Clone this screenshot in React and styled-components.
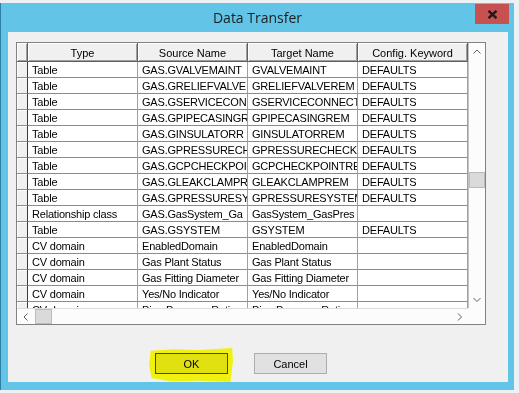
import React from 'react'
import styled, { createGlobalStyle } from 'styled-components'

const GlobalStyle = createGlobalStyle`
  html, body { margin: 0; padding: 0; }
  body {
    width: 519px;
    height: 393px;
    overflow: hidden;
    background: #eef1f3;
    font-family: "Liberation Sans", Arial, sans-serif;
  }
`

const Desktop = styled.div`
  width: 519px;
  height: 393px;
  padding-top: 3px;
  box-sizing: border-box;
`

const Window = styled.div`
  width: 514px;
  height: 387px;
  box-sizing: border-box;
  background: #62c4e6;
  border-left: 1px solid #2f7fa3;
  padding: 0 6px 8px 7px;
  display: flex;
  flex-direction: column;
`

const TitleBar = styled.div`
  height: 29px;
  margin: 0 -6px 0 -7px;
  display: grid;
  grid-template-columns: 1fr auto 1fr;
  align-items: center;
`

const Title = styled.div`
  grid-column: 2;
  font-family: "Open Sans", "Noto Sans", sans-serif;
  font-size: 14px;
  color: #1d1d1d;
`

const CloseButton = styled.div`
  grid-column: 3;
  justify-self: end;
  align-self: start;
  margin: 1px 5px 0 0;
  width: 34px;
  height: 20px;
  background: #c75050;
  display: flex;
  align-items: center;
  justify-content: center;
`

const Client = styled.div`
  flex: 1;
  background: #f0f0f0;
  padding: 10px 0 0 8px;
  display: flex;
  flex-direction: column;
`

const Grid = styled.div`
  width: 470px;
  height: 283px;
  box-sizing: border-box;
  border: 1px solid #828282;
  display: grid;
  grid-template-columns: 451px 17px;
  grid-template-rows: 265px 16px;
  background: #fff;
`

const Main = styled.div`
  overflow: hidden;
`

const Row = styled.div`
  display: grid;
  grid-template-columns: 11px repeat(4, 110px);
  height: ${(p) => (p.header ? '19px' : '16px')};
`

const HeadCell = styled.div`
  box-sizing: border-box;
  background: #f0f0f0;
  border-right: 1px solid #5f5f5f;
  border-bottom: 1px solid #5f5f5f;
  box-shadow: inset 1px 1px 0 #fff, inset -1px -1px 0 #a0a0a0;
  font-size: 11px;
  padding-top: 1px;
  color: #000;
  display: flex;
  align-items: center;
  justify-content: center;
`

const RowHead = styled.div`
  box-sizing: border-box;
  background: #f0f0f0;
  border-right: 1px solid #3a3a3a;
  border-bottom: 1px solid #8c8c8c;
  box-shadow: inset 1px 1px 0 #fff;
`

const Cell = styled.div`
  box-sizing: border-box;
  border-right: 1px solid #a0a0a0;
  border-bottom: 1px solid #8c8c8c;
  padding: 1px 0 0 4px;
  font-size: 11px;
  letter-spacing: -0.2px;
  line-height: 14px;
  color: #000;
  white-space: nowrap;
  overflow: hidden;
`

const VScroll = styled.div`
  background: #fcfcfc;
  border-left: 1px solid #c4c4c4;
  display: flex;
  flex-direction: column;
`

const HScroll = styled.div`
  background: #fcfcfc;
  border-top: 1px solid #dcdcdc;
  display: flex;
`

const Corner = styled.div`
  background: #fcfcfc;
`

const ArrowBox = styled.div`
  flex: 0 0 17px;
  display: flex;
  align-items: center;
  justify-content: center;
`

const Track = styled.div`
  flex: 1;
  display: flex;
  flex-direction: ${(p) => (p.vertical ? 'column' : 'row')};
`

const Thumb = styled.div`
  box-sizing: border-box;
  width: ${(p) => (p.vertical ? '16px' : '17px')};
  height: ${(p) => (p.vertical ? '16px' : '15px')};
  margin: ${(p) => (p.vertical ? '112px 0 0 0' : '0 0 0 1px')};
  background: #dadada;
  border: 1px solid #bcbcbc;
`

const ButtonRow = styled.div`
  display: flex;
  gap: 26px;
  padding-left: 139px;
  margin-top: 28px;
`

const Marked = styled.div`
  position: relative;
`

const Marker = styled.span`
  position: absolute;
  top: -5px;
  left: -6px;
  right: -5px;
  bottom: -8px;
  background: #ffff12;
  mix-blend-mode: multiply;
  pointer-events: none;
  clip-path: polygon(2% 8%, 30% 4%, 60% 6%, 99% 0%, 100% 40%, 98% 78%, 97% 100%, 60% 96%, 25% 98%, 3% 88%, 0% 50%);
`

const Button = styled.button`
  width: 73px;
  height: 21px;
  box-sizing: border-box;
  padding: 0;
  border: 1px solid ${(p) => (p.primary ? '#2f5a86' : '#adadad')};
  background: #e1e1e1;
  font-family: "Liberation Sans", Arial, sans-serif;
  font-size: 11px;
  color: #000;
`

const rows = [
  ['Table', 'GAS.GVALVEMAINT', 'GVALVEMAINT', 'DEFAULTS'],
  ['Table', 'GAS.GRELIEFVALVE', 'GRELIEFVALVEREM', 'DEFAULTS'],
  ['Table', 'GAS.GSERVICECON', 'GSERVICECONNECTI', 'DEFAULTS'],
  ['Table', 'GAS.GPIPECASINGR', 'GPIPECASINGREM', 'DEFAULTS'],
  ['Table', 'GAS.GINSULATORR', 'GINSULATORREM', 'DEFAULTS'],
  ['Table', 'GAS.GPRESSURECH', 'GPRESSURECHECKP', 'DEFAULTS'],
  ['Table', 'GAS.GCPCHECKPOIN', 'GCPCHECKPOINTRE', 'DEFAULTS'],
  ['Table', 'GAS.GLEAKCLAMPR', 'GLEAKCLAMPREM', 'DEFAULTS'],
  ['Table', 'GAS.GPRESSURESY', 'GPRESSURESYSTEM', 'DEFAULTS'],
  ['Relationship class', 'GAS.GasSystem_Ga', 'GasSystem_GasPres', ''],
  ['Table', 'GAS.GSYSTEM', 'GSYSTEM', 'DEFAULTS'],
  ['CV domain', 'EnabledDomain', 'EnabledDomain', ''],
  ['CV domain', 'Gas Plant Status', 'Gas Plant Status', ''],
  ['CV domain', 'Gas Fitting Diameter', 'Gas Fitting Diameter', ''],
  ['CV domain', 'Yes/No Indicator', 'Yes/No Indicator', ''],
  ['CV domain', 'Pipe Pressure Rating', 'Pipe Pressure Rating', ''],
]

const Chevron = ({ dir }) => {
  const pts = {
    up: '0.5,4.5 4,1 7.5,4.5',
    down: '0.5,1 4,4.5 7.5,1',
    left: '4.5,0.5 1,4 4.5,7.5',
    right: '1,0.5 4.5,4 1,7.5',
  }[dir]
  const vertical = dir === 'up' || dir === 'down'
  return (
    <svg width={vertical ? 8 : 6} height={vertical ? 6 : 8} viewBox={vertical ? '0 0 8 6' : '0 0 6 8'}>
      <polyline points={pts} fill="none" stroke="#606060" strokeWidth="1" />
    </svg>
  )
}

const App = () => {
  return (
    <>
      <GlobalStyle />
      <Desktop>
        <Window>
          <TitleBar>
            <Title>Data Transfer</Title>
            <CloseButton>
              <svg width="11" height="9" viewBox="0 0 11 9">
                <path d="M1.5 0.8 L9.5 8.2 M9.5 0.8 L1.5 8.2" stroke="#1c1c1c" strokeWidth="2.4" />
              </svg>
            </CloseButton>
          </TitleBar>
          <Client>
            <Grid>
              <Main>
                <Row header>
                  <HeadCell />
                  <HeadCell>Type</HeadCell>
                  <HeadCell>Source Name</HeadCell>
                  <HeadCell>Target Name</HeadCell>
                  <HeadCell>Config. Keyword</HeadCell>
                </Row>
                {rows.map((r, i) => (
                  <Row key={i}>
                    <RowHead />
                    {r.map((c, j) => (
                      <Cell key={j}>{c}</Cell>
                    ))}
                  </Row>
                ))}
              </Main>
              <VScroll>
                <ArrowBox>
                  <Chevron dir="up" />
                </ArrowBox>
                <Track vertical>
                  <Thumb vertical />
                </Track>
                <ArrowBox>
                  <Chevron dir="down" />
                </ArrowBox>
              </VScroll>
              <HScroll>
                <ArrowBox>
                  <Chevron dir="left" />
                </ArrowBox>
                <Track>
                  <Thumb />
                </Track>
                <ArrowBox>
                  <Chevron dir="right" />
                </ArrowBox>
              </HScroll>
              <Corner />
            </Grid>
            <ButtonRow>
              <Marked>
                <Button primary>OK</Button>
                <Marker />
              </Marked>
              <Button>Cancel</Button>
            </ButtonRow>
          </Client>
        </Window>
      </Desktop>
    </>
  )
}

export default App
